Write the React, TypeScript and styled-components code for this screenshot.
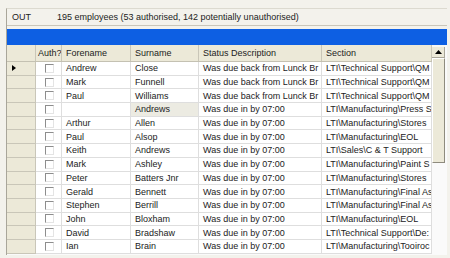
import styled, { createGlobalStyle } from 'styled-components';

type Row = {
    forename: string
    surname: string
    status: string
    section: string
}

const rows: Row[] = [
    {forename: 'Andrew', surname: 'Close', status: 'Was due back from Lunck Br', section: 'LTI\\Technical Support\\QM'},
    {forename: 'Mark', surname: 'Funnell', status: 'Was due back from Lunck Br', section: 'LTI\\Technical Support\\QM'},
    {forename: 'Paul', surname: 'Williams', status: 'Was due back from Lunck Br', section: 'LTI\\Technical Support\\QM'},
    {forename: '', surname: 'Andrews', status: 'Was due in by 07:00', section: 'LTI\\Manufacturing\\Press S'},
    {forename: 'Arthur', surname: 'Allen', status: 'Was due in by 07:00', section: 'LTI\\Manufacturing\\Stores'},
    {forename: 'Paul', surname: 'Alsop', status: 'Was due in by 07:00', section: 'LTI\\Manufacturing\\EOL'},
    {forename: 'Keith', surname: 'Andrews', status: 'Was due in by 07:00', section: 'LTI\\Sales\\C & T Support'},
    {forename: 'Mark', surname: 'Ashley', status: 'Was due in by 07:00', section: 'LTI\\Manufacturing\\Paint S'},
    {forename: 'Peter', surname: 'Batters Jnr', status: 'Was due in by 07:00', section: 'LTI\\Manufacturing\\Stores'},
    {forename: 'Gerald', surname: 'Bennett', status: 'Was due in by 07:00', section: 'LTI\\Manufacturing\\Final As'},
    {forename: 'Stephen', surname: 'Berrill', status: 'Was due in by 07:00', section: 'LTI\\Manufacturing\\Final As'},
    {forename: 'John', surname: 'Bloxham', status: 'Was due in by 07:00', section: 'LTI\\Manufacturing\\EOL'},
    {forename: 'David', surname: 'Bradshaw', status: 'Was due in by 07:00', section: 'LTI\\Technical Support\\De:'},
    {forename: 'Ian', surname: 'Brain', status: 'Was due in by 07:00', section: 'LTI\\Manufacturing\\Tooiroc'},
];

const COLS = '29px 26px 69px 68px 123px 110px';

export default function App() {
    return (
        <>
            <GlobalStyle/>
            <Frame>
                <StatusBar>
                    <StatusCode>OUT</StatusCode>
                    <StatusText>195 employees (53 authorised, 142 potentially unauthorised)</StatusText>
                </StatusBar>
                <BlueBar/>
                <GridArea>
                    <Table>
                        <HeaderRow>
                            <HeadCell/>
                            <HeadCell $tight>Auth?</HeadCell>
                            <HeadCell>Forename</HeadCell>
                            <HeadCell>Surname</HeadCell>
                            <HeadCell>Status Description</HeadCell>
                            <HeadCell>Section</HeadCell>
                        </HeaderRow>
                        {rows.map((r, i) => (
                            <DataRow key={i}>
                                <Selector>{i === 0 && <Pointer/>}</Selector>
                                <Cell><CheckBox/></Cell>
                                <Cell>{r.forename}</Cell>
                                <Cell $current={i === 3}>{r.surname}</Cell>
                                <Cell>{r.status}</Cell>
                                <Cell>{r.section}</Cell>
                            </DataRow>
                        ))}
                    </Table>
                    <ScrollBar>
                        <UpButton>
                            <svg width="7" height="4" viewBox="0 0 7 4">
                                <path d="M3.5 0 L7 4 L0 4 Z" fill="#000"/>
                            </svg>
                        </UpButton>
                        <Thumb/>
                        <Track/>
                    </ScrollBar>
                </GridArea>
            </Frame>
        </>
    );
}

const GlobalStyle = createGlobalStyle`
  body {
    margin: 0;
    background: #f3f2ec;
    font-family: "Liberation Sans", Arial, sans-serif;
  }
`;

const Frame = styled.div`
  margin: 8px 0 0 6px;
  width: 440px;
  height: 246px;
  border-left: 1px solid #a9a69a;
  border-top: 1px solid #dcdad0;
  display: flex;
  flex-direction: column;
  background: #f3f2ec;
`;

const StatusBar = styled.div`
  height: 16px;
  display: flex;
  align-items: center;
  border-bottom: 1px solid #c9c6b9;
  font-size: 9px;
  color: #222;
`;

const StatusCode = styled.span`
  width: 45px;
  padding-left: 5px;
`;

const StatusText = styled.span`
  white-space: nowrap;
`;

const BlueBar = styled.div`
  margin-top: 3px;
  height: 16px;
  background: #0d5fe3;
`;

const GridArea = styled.div`
  display: flex;
  flex: 1;
  background: #fafafa;
`;

const Table = styled.div`
  width: 425px;
  display: flex;
  flex-direction: column;
`;

const HeaderRow = styled.div`
  display: grid;
  grid-template-columns: ${COLS};
  height: 16px;
  background: #ece9d8;
  border-bottom: 1px solid #c4c1b2;
`;

const HeadCell = styled.div<{ $tight?: boolean }>`
  font-size: 9px;
  color: #222;
  display: flex;
  align-items: center;
  padding-left: ${p => (p.$tight ? '2px' : '4px')};
  border-right: 1px solid #c9c6b8;
  white-space: nowrap;
  overflow: hidden;
`;

const DataRow = styled.div`
  display: grid;
  grid-template-columns: ${COLS};
  height: 13.7px;
  background: #fff;
`;

const Selector = styled.div`
  background: #ece9d8;
  border-right: 1px solid #c9c6b8;
  border-bottom: 1px solid #c9c6b8;
  display: flex;
  align-items: center;
  padding-left: 5px;
`;

const Pointer = styled.div`
  width: 0;
  height: 0;
  border-top: 3.5px solid transparent;
  border-bottom: 3.5px solid transparent;
  border-left: 4px solid #000;
`;

const Cell = styled.div<{ $current?: boolean }>`
  font-size: 9px;
  color: #222;
  display: flex;
  align-items: center;
  padding-left: 4px;
  border-right: 1px solid #dedede;
  border-bottom: 1px solid #dedede;
  background: ${p => (p.$current ? '#ecebe2' : '#fff')};
  white-space: nowrap;
  overflow: hidden;
`;

const CheckBox = styled.div`
  width: 9px;
  height: 9px;
  margin-left: 5px;
  box-sizing: border-box;
  border-top: 1px solid #8d8d8d;
  border-left: 1px solid #8d8d8d;
  border-right: 1px solid #e4e4e4;
  border-bottom: 1px solid #e4e4e4;
  background: #fff;
`;

const ScrollBar = styled.div`
  width: 13px;
  display: flex;
  flex-direction: column;
  background: #f7f7f3;
`;

const UpButton = styled.div`
  height: 11px;
  margin-top: 2px;
  display: flex;
  align-items: center;
  justify-content: center;
  background: #ece9d8;
  border-right: 1px solid #a9a69a;
  border-bottom: 1px solid #a9a69a;
  box-sizing: border-box;
`;

const Thumb = styled.div`
  height: 105px;
  background: #ece9d8;
  box-sizing: border-box;
  border: 1px solid #fff;
  border-right-color: #8e8b7e;
  border-bottom-color: #8e8b7e;
`;

const Track = styled.div`
  flex: 1;
  background: #fafafa;
`;
